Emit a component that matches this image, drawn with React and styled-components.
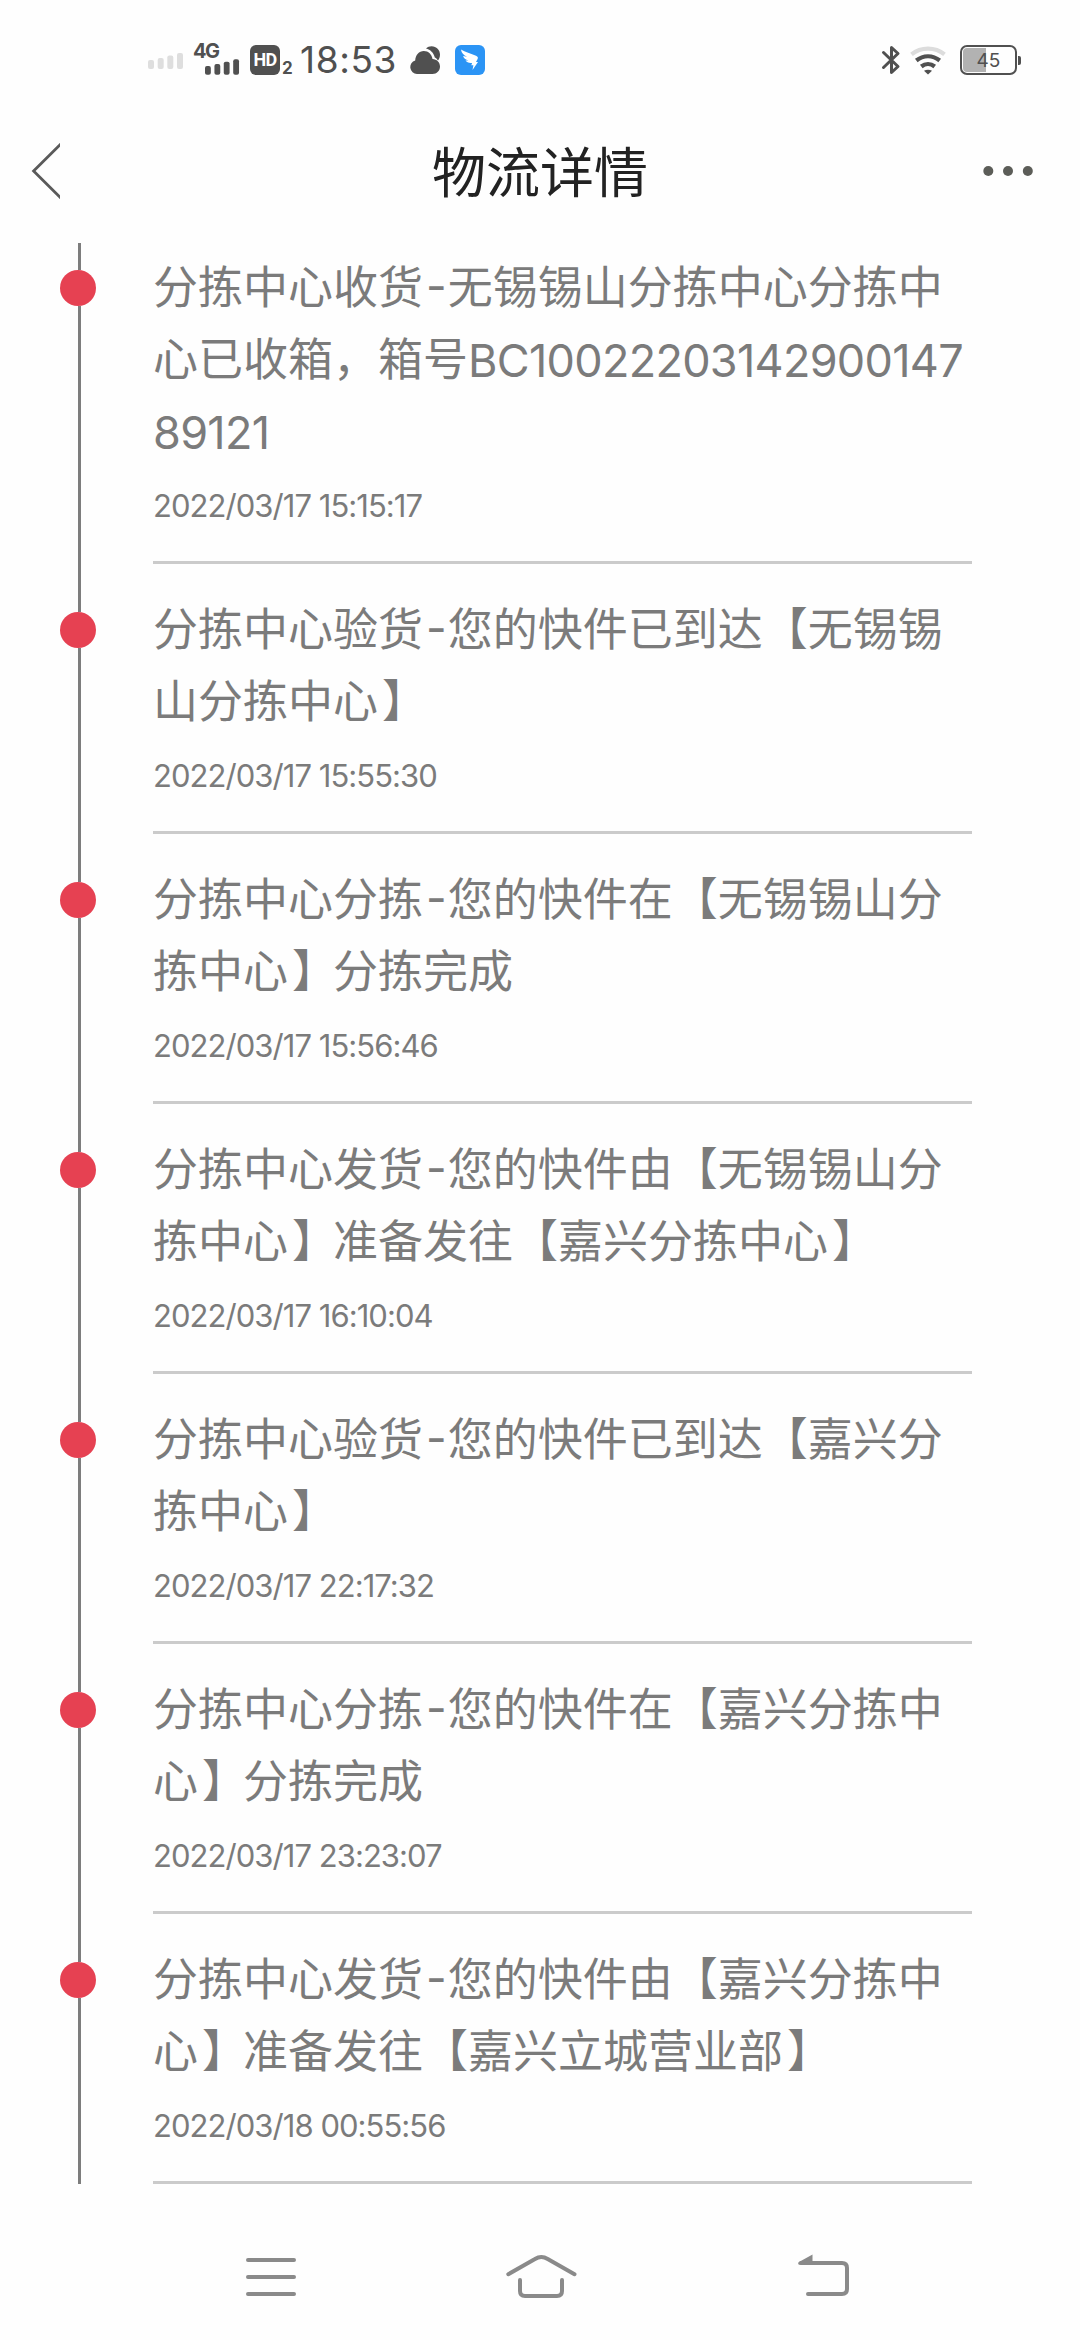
import styled, { createGlobalStyle } from 'styled-components';

const GlobalStyle = createGlobalStyle`
  * {
    box-sizing: border-box;
  }
  body {
    margin: 0;
    background: #fefefe;
    font-family: Inter, 'Noto Sans CJK SC', sans-serif;
  }
`;
const Screen = styled.div`
  width: 1080px;
  height: 2340px;
  overflow: hidden;
  display: flex;
  flex-direction: column;
  background: #fefefe;
`;
const StatusBar = styled.div`
  height: 105px;
  padding: 40px 59px 0 148px;
  display: flex;
  justify-content: space-between;
  color: #505050;
`;
const StatusGroup = styled.div`
  height: 40px;
  display: flex;
  align-items: center;
  gap: ${props => props.gap || 0}px;
`;
const Network = styled.div`
  width: 47px;
  height: 40px;
  margin: 0 10px 0 9px;
  display: flex;
  flex-direction: column;
`;
const NetworkType = styled.span`
  height: 18px;
  font-size: 20px;
  line-height: 23px;
  font-weight: 700;
  letter-spacing: -1.6px;
`;
const NetworkSignal = styled.div`
  height: 17px;
  padding-left: 12px;
  display: flex;
`;
const HdBadge = styled.span`
  width: 30px;
  height: 30px;
  border-radius: 6px;
  background: #505050;
  color: #fff;
  font-family: Roboto, sans-serif;
  font-size: 18px;
  font-weight: 700;
  line-height: 30px;
  text-align: center;
  letter-spacing: -0.8px;
`;
const SimIndex = styled.span`
  width: 13px;
  margin: 16px 0 0 2px;
  font-size: 17px;
  line-height: 20px;
  font-weight: 700;
`;
const Clock = styled.span`
  width: 100px;
  margin: 0 10px 0 5px;
  font-size: 37px;
  line-height: 40px;
  letter-spacing: 0.6px;
  white-space: nowrap;
`;
const Battery = styled.div`
  width: 57px;
  height: 30px;
  margin-left: 14px;
  border: 2px solid #505050;
  border-radius: 7px;
  padding: 1px;
  display: flex;
`;
const BatteryLevel = styled.div`
  width: 100%;
  border-radius: 4px;
  background: linear-gradient(to right, #b2b2b2 ${props => props.level}%, transparent ${props => props.level}%);
  font-size: 19px;
  line-height: 25px;
  text-align: center;
`;
const BatteryTip = styled.div`
  width: 3px;
  height: 9px;
  margin-left: 1px;
  border-radius: 0 2px 2px 0;
  background: #505050;
`;
const Header = styled.header`
  height: 138px;
  padding: 0 45px 0 30px;
  display: grid;
  grid-template-columns: 240px 1fr 225px;
  align-items: center;
`;
const HeaderTitle = styled.h1`
  margin: 0;
  font-size: 54px;
  line-height: 72px;
  font-weight: 400;
  color: #222;
  text-align: center;
`;
const HeaderButton = styled.button`
  height: 100%;
  padding: 0 0 7px;
  border: 0;
  background: none;
  display: flex;
  align-items: center;
  justify-content: ${props => props.align};
`;
const Timeline = styled.ul`
  height: 1941px;
  margin: 0;
  padding: 0 108px 0 60px;
  list-style: none;
`;
const Item = styled.li`
  display: flex;
  gap: 57px;
`;
const Rail = styled.div`
  width: 36px;
  display: flex;
  flex-direction: column;
`;
const RailLine = styled.div`
  width: 3px;
  margin-left: 18px;
  background: #7d7d7d;
  ${props => props.height ? `height: ${props.height}px;` : 'flex: 1;'}
`;
const Dot = styled.div`
  width: 36px;
  height: 36px;
  border-radius: 50%;
  background: #e64152;
`;
const Content = styled.div`
  width: 820px;
  padding-top: ${props => props.top}px;
  border-bottom: 3px solid #cbcbcb;
  color: #7b7b7b;
`;
const Line = styled.p`
  height: 72px;
  margin: 0;
  font-size: 45px;
  line-height: 72px;
  white-space: nowrap;
`;
const Latin = styled.span`
  line-height: 1;
  letter-spacing: -0.7px;
  vertical-align: -1px;
`;
const Hyphen = styled.span`
  padding: 0 1px 0 3px;
  line-height: 1;
  vertical-align: 2px;
`;
const CloseBracket = styled.span`
  margin: 0 -4px 0 4px;
`;
const Time = styled.p`
  margin: 18px 0 35px;
  font-size: 31px;
  line-height: 40px;
  letter-spacing: -0.95px;
  white-space: nowrap;
`;
const NavBar = styled.nav`
  height: 156px;
  padding: 30px 135px 0;
  display: grid;
  grid-template-columns: repeat(3, 270px);
`;
const NavButton = styled.button`
  padding: 0;
  border: 0;
  background: none;
  display: flex;
  align-items: center;
  justify-content: center;
`;

const SignalBars = ({ color }) => (
  <svg width='36' height='17' viewBox='0 0 36 17' fill={color}>
    <rect x='0' y='8' width='6' height='9' rx='2' />
    <rect x='9.7' y='6' width='6' height='11' rx='2' />
    <rect x='19.3' y='3.5' width='6' height='13.5' rx='2' />
    <rect x='29' y='1' width='6' height='16' rx='2' />
  </svg>
);

const CloudIcon = () => (
  <svg width='30' height='30' viewBox='0 0 30 30' fill='#505050'>
    <path d='M16 3.600C17.500 2 19.500 1.200 21.500 1.200c5 0 8.500 3.600 8.500 8.400 0 2.300-.7 4.400-2 6-.8-1.500-1.800-2.500-3.200-3.200C23.600 8 20.500 4.600 16 3.600z' />
    <path d='M7 29a6.900 6.900 0 0 1-1.800-13.500C5.500 10 9 6 13.800 6c4.700 0 8 3.300 8.700 8 4.200.2 7.500 3.300 7.500 7.500S26.800 29 22.500 29z' />
  </svg>
);

const DingIcon = () => (
  <svg width='30' height='30' viewBox='0 0 30 30'>
    <rect width='30' height='30' rx='6' fill='#2b94f5' />
    <path fill='#fff' d='M6 4.500c4 2.500 10 4 15 6.200 2 .9 2.200 2 1.600 3.300L21 17h2l-5.500 8 .9-4.700h-2.100l.8-2.300c-3.100.4-5.300-.5-6.600-2.400l3-.2c-3-.6-4.900-2-5.400-4.300l4 .7C8.500 10.200 6.500 8 6 4.500z' />
  </svg>
);

const BluetoothIcon = () => (
  <svg width='20' height='30' viewBox='0 0 20 30' fill='none' stroke='#505050' strokeWidth='3' strokeLinejoin='round' strokeLinecap='round'>
    <path d='M2.500 7.500l14.500 14L10.500 27.500V2.500L17 8.500l-14.500 14' />
  </svg>
);

const WifiIcon = () => (
  <svg width='36' height='30' viewBox='0 0 36 30' fill='none' strokeWidth='4.200'>
    <path d='M1.500 9.300C11 1.800 25 1.800 34.500 9.300' stroke='#dcdcdc' />
    <path d='M6.300 15.500c7-5.700 16.400-5.700 23.400 0' stroke='#505050' />
    <path d='M11.300 21.500c4-3.200 9.400-3.200 13.400 0' stroke='#505050' />
    <path d='M14 25.800c2.500-1.500 5.500-1.500 8 0L18 29.500z' fill='#505050' />
  </svg>
);

const BackIcon = () => (
  <svg width='30' height='56' viewBox='0 0 30 56' fill='none' stroke='#5a5a5a' strokeWidth='2.800'>
    <path d='M31 .8L3.600 28 31 55.200' />
  </svg>
);

const MoreIcon = () => (
  <svg width='54' height='12' viewBox='0 0 54 12' fill='#5c5d58'>
    <circle cx='7.300' cy='6' r='5' />
    <circle cx='27' cy='6' r='5' />
    <circle cx='46.800' cy='6' r='5' />
  </svg>
);

const navIconProps = {
  width: 78,
  height: 48,
  viewBox: '0 0 78 48',
  fill: 'none',
  stroke: '#8a8a8a',
  strokeWidth: 4,
  strokeLinecap: 'round',
};

const MenuNavIcon = () => (
  <svg {...navIconProps}>
    <path d='M17 7H63M17 24H63M17 41H63' />
  </svg>
);

const HomeNavIcon = () => (
  <svg {...navIconProps}>
    <path d='M7.300 21.200L34 6Q40.300 2.200 46.700 6L73.500 21.200' />
    <path d='M19 27V38Q19 43 24 43H56Q61 43 61 38V27' />
  </svg>
);

const BackNavIcon = () => (
  <svg {...navIconProps}>
    <path d='M30 10H71Q76 10 76 15V36Q76 41 71 41H37' />
    <path d='M27.500 9.200L41.500 1.500V11.800H28.500Q26.500 11.500 27.500 9.200z' fill='#8a8a8a' stroke='none' />
  </svg>
);

const records = [
  {
    lines: ['分拣中心收货-无锡锡山分拣中心分拣中', '心已收箱，箱号BC10022203142900147', '89121'],
    time: '2022/03/17 15:15:17',
  },
  { lines: ['分拣中心验货-您的快件已到达【无锡锡', '山分拣中心】'], time: '2022/03/17 15:55:30' },
  { lines: ['分拣中心分拣-您的快件在【无锡锡山分', '拣中心】分拣完成'], time: '2022/03/17 15:56:46' },
  { lines: ['分拣中心发货-您的快件由【无锡锡山分', '拣中心】准备发往【嘉兴分拣中心】'], time: '2022/03/17 16:10:04' },
  { lines: ['分拣中心验货-您的快件已到达【嘉兴分', '拣中心】'], time: '2022/03/17 22:17:32' },
  { lines: ['分拣中心分拣-您的快件在【嘉兴分拣中', '心】分拣完成'], time: '2022/03/17 23:23:07' },
  { lines: ['分拣中心发货-您的快件由【嘉兴分拣中', '心】准备发往【嘉兴立城营业部】'], time: '2022/03/18 00:55:56' },
];

// latin runs, hyphens and closing brackets are spaced differently from the chinese text
const renderLine = text => text.split(/([A-Z0-9]+|-|】)/).map((part, i) => {
  if (i % 2 === 0) return part;
  if (part === '-') return <Hyphen key={i}>{part}</Hyphen>;
  if (part === '】') return <CloseBracket key={i}>{part}</CloseBracket>;
  return <Latin key={i}>{part}</Latin>;
});

const Record = ({ record, first }) => (
  <Item>
    <Rail>
      <RailLine height={first ? 27 : 48} />
      <Dot />
      <RailLine />
    </Rail>
    <Content top={first ? 9 : 30}>
      {record.lines.map(line => <Line key={line}>{renderLine(line)}</Line>)}
      <Time>{record.time}</Time>
    </Content>
  </Item>
);

const App = () => (
  <Screen>
    <GlobalStyle />
    <StatusBar>
      <StatusGroup>
        <SignalBars color='#dedede' />
        <Network>
          <NetworkType>4G</NetworkType>
          <NetworkSignal>
            <SignalBars color='#505050' />
          </NetworkSignal>
        </Network>
        <HdBadge>HD</HdBadge>
        <SimIndex>2</SimIndex>
        <Clock>18:53</Clock>
        <StatusGroup gap={15}>
          <CloudIcon />
          <DingIcon />
        </StatusGroup>
      </StatusGroup>
      <StatusGroup>
        <StatusGroup gap={9}>
          <BluetoothIcon />
          <WifiIcon />
        </StatusGroup>
        <Battery>
          <BatteryLevel level={45}>45</BatteryLevel>
        </Battery>
        <BatteryTip />
      </StatusGroup>
    </StatusBar>
    <Header>
      <HeaderButton align='flex-start'><BackIcon /></HeaderButton>
      <HeaderTitle>物流详情</HeaderTitle>
      <HeaderButton align='flex-end'><MoreIcon /></HeaderButton>
    </Header>
    <Timeline>
      {records.map((record, i) => <Record key={record.time} record={record} first={i === 0} />)}
    </Timeline>
    <NavBar>
      <NavButton><MenuNavIcon /></NavButton>
      <NavButton><HomeNavIcon /></NavButton>
      <NavButton><BackNavIcon /></NavButton>
    </NavBar>
  </Screen>
);

export default App;
